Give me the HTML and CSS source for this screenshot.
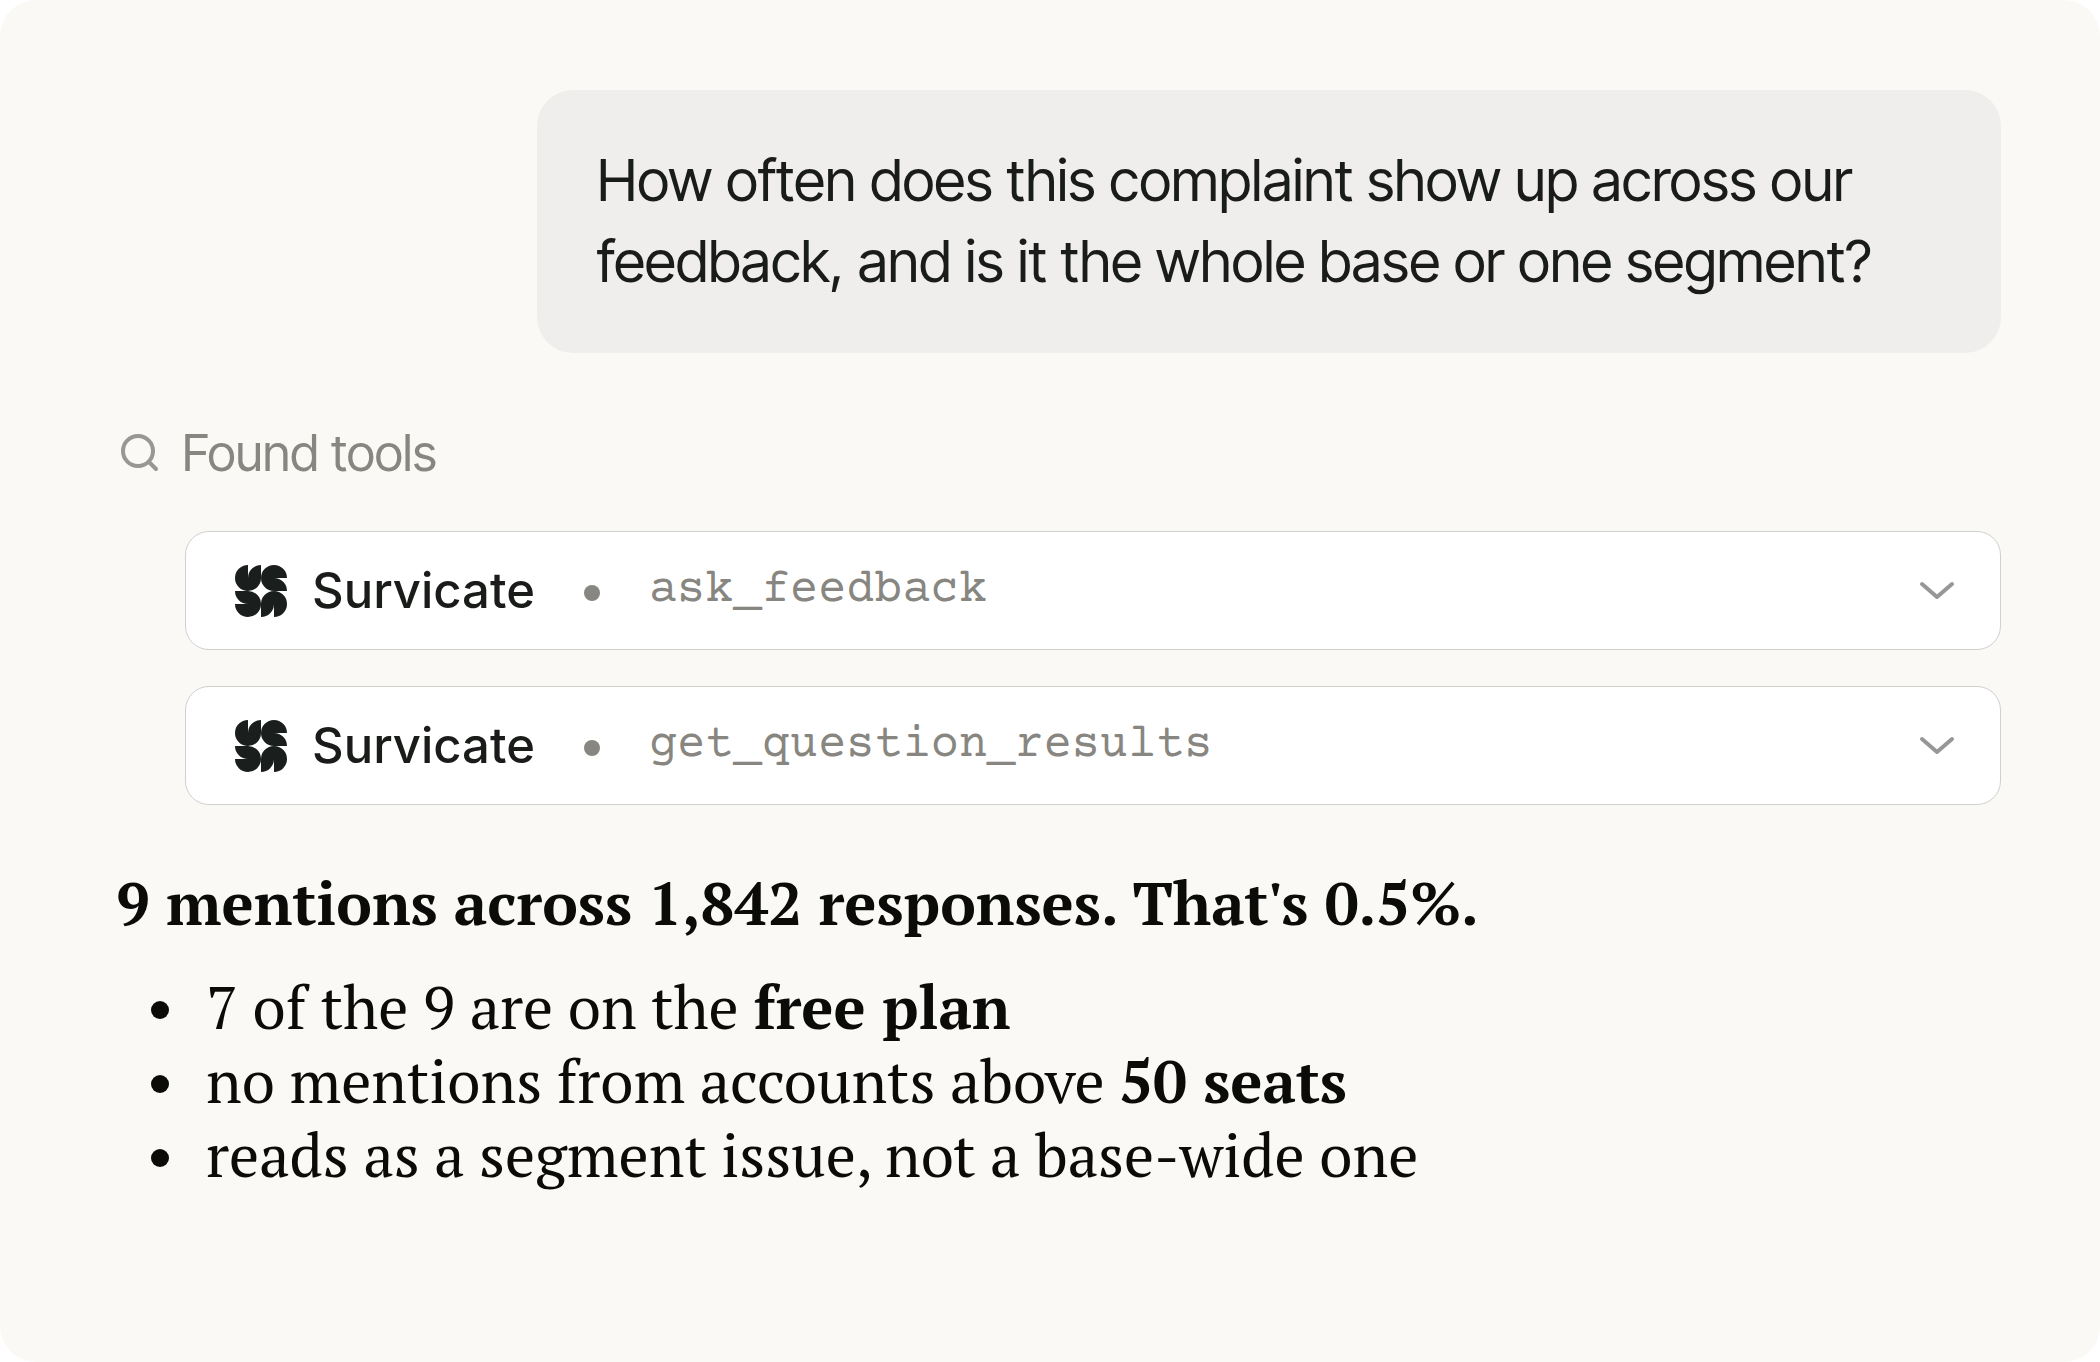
FILE: index.html
```html
<!DOCTYPE html>
<html lang="en">

<head>
  <meta charset="UTF-8">
  <meta name="viewport" content="width=device-width, initial-scale=1">
  <title>Survicate chat</title>
  <link rel="stylesheet" href="styles.css">
</head>

<body>
  <!-- shared logo shape -->
  <svg class="sprite" width="0" height="0" aria-hidden="true">
    <symbol id="logo" viewBox="0 0 52 52">
      <path id="petal" d="M13 0A13 13 0 1 0 26 13V0A13 13 0 0 0 13 13Z" />
      <use href="#petal" transform="rotate(90 26 26)" />
      <use href="#petal" transform="rotate(180 26 26)" />
      <use href="#petal" transform="rotate(270 26 26)" />
    </symbol>
  </svg>

  <main class="chat">
    <p class="question">How often does this complaint show up across our feedback, and is it the whole base or one segment?</p>

    <section class="tools">
      <div class="tools-title">
        <svg class="search" viewBox="0 0 40 40" aria-hidden="true">
          <circle cx="18" cy="18" r="15" />
          <path d="M29 29L36 36" />
        </svg>
        <span>Found tools</span>
      </div>
      <div class="tools-list">
        <button class="tool" type="button">
          <svg class="logo" aria-hidden="true"><use href="#logo" /></svg>
          <span class="tool-app">Survicate</span>
          <span class="dot"></span>
          <code class="tool-name">ask_feedback</code>
          <svg class="chevron" viewBox="0 0 36 20" aria-hidden="true">
            <path d="M3 3L18 16L33 3" />
          </svg>
        </button>
        <button class="tool" type="button">
          <svg class="logo" aria-hidden="true"><use href="#logo" /></svg>
          <span class="tool-app">Survicate</span>
          <span class="dot"></span>
          <code class="tool-name">get_question_results</code>
          <svg class="chevron" viewBox="0 0 36 20" aria-hidden="true">
            <path d="M3 3L18 16L33 3" />
          </svg>
        </button>
      </div>
    </section>

    <section class="answer">
      <h1>9 mentions across 1,842 responses. That's 0.5%.</h1>
      <ul>
        <li>7 of the 9 are on the <b>free plan</b></li>
        <li>no mentions from accounts above <b>50 seats</b></li>
        <li>reads as a segment issue, not a base-wide one</li>
      </ul>
    </section>
  </main>
</body>

</html>
```

FILE: styles.css
```css
* {
  box-sizing: border-box;
}

body {
  margin: 0;
  background: #fff;
}

.sprite {
  position: absolute;
}

.chat {
  display: flex;
  flex-direction: column;
  min-height: 100vh;
  padding: 90px 99px 90px 116px;
  border-radius: 36px;
  background: #faf9f5;
  font-family: Inter, "Liberation Sans", sans-serif;
  color: #1a1c1a;
}

/* user message */
.question {
  align-self: flex-end;
  max-width: 1464px;
  margin: 0;
  padding: 50px 60px 51px;
  border-radius: 36px;
  background: #efeeec;
  font-family: "Inter Tight", Roboto, sans-serif;
  font-size: 58px;
  line-height: 81px;
}

/* the bubble keeps its full width on wide screens */
@media (min-width: 1700px) {
  .question {
    width: 1464px;
  }
}

/* tool calls */
.tools {
  margin-top: 68px;
}

.tools-title {
  display: flex;
  align-items: center;
  gap: 22px;
  padding-left: 4px;
  font-family: "Inter Tight", Roboto, sans-serif;
  font-size: 51px;
  line-height: 64px;
  color: #878680;
}

.search {
  width: 40px;
  height: 40px;
  fill: none;
  stroke: #979893;
  stroke-width: 4;
  stroke-linecap: round;
}

.tools-list {
  display: flex;
  flex-direction: column;
  gap: 36px;
  margin: 46px 0 0 69px;
}

.tool {
  display: flex;
  align-items: center;
  width: 100%;
  height: 119px;
  padding: 0 45px 0 49px;
  border: 1px solid #d0d0cd;
  border-radius: 24px;
  background: #fff;
  font: inherit;
  color: #1a1c1a;
  text-align: left;
}

.logo {
  width: 52px;
  height: 52px;
  margin-right: 25px;
  fill: #1a1e1d;
}

.tool-app {
  font-size: 49px;
  font-weight: 500;
}

.dot {
  width: 16px;
  height: 16px;
  margin: 5px 49px 0;
  border-radius: 50%;
  background: #878680;
}

.tool-name {
  font-family: "Courier Prime", "Liberation Mono", monospace;
  font-size: 47px;
  color: #878680;
}

.chevron {
  width: 36px;
  height: 20px;
  margin-left: auto;
  fill: none;
  stroke: #979797;
  stroke-width: 4;
  stroke-linecap: round;
  stroke-linejoin: round;
}

/* assistant answer */
.answer {
  margin-top: 58px;
  font-family: "PT Serif", "Liberation Serif", serif;
  font-size: 60px;
  line-height: 74px;
  color: #0b0b0a;
}

.answer h1 {
  margin: 0;
  font-size: 60px;
  line-height: 80px;
}

.answer ul {
  margin: 27px 0 0;
  padding-left: 90px;
  list-style: none;
}

.answer li::before {
  content: "";
  display: inline-block;
  width: 18px;
  height: 18px;
  margin: 0 37px 0 -55px;
  border-radius: 50%;
  background: #0b0b0a;
  vertical-align: 10px;
}
```
